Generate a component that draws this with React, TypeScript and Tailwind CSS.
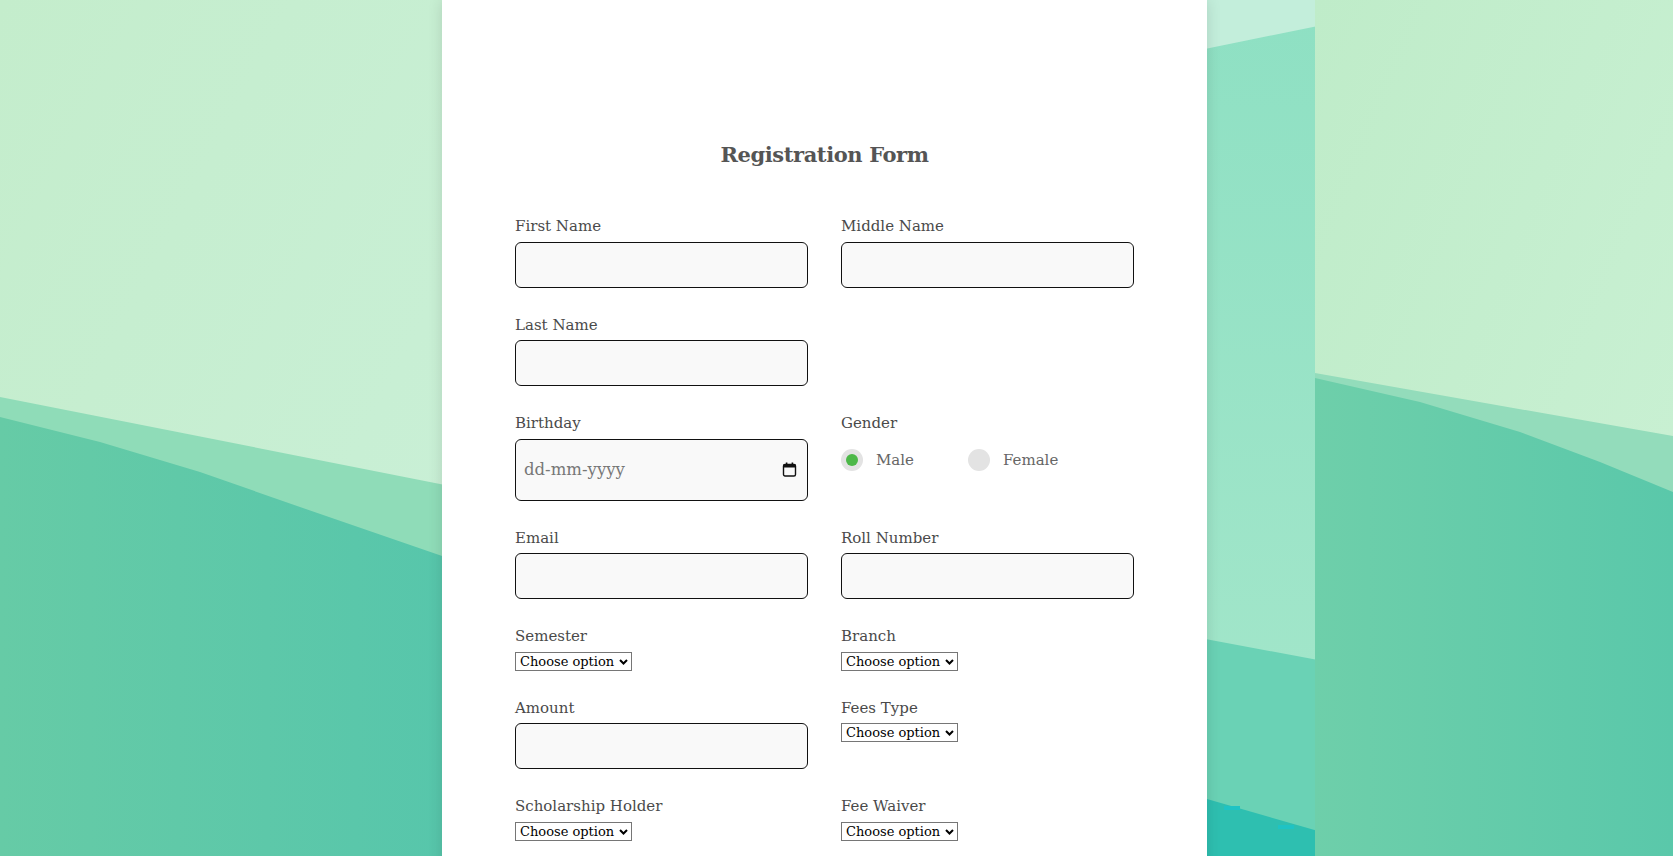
import React from "react";

const serif = "font-['DejaVu_Serif',serif]";

function Background() {
  return (
    <svg
      className="absolute left-0 top-0 h-[856px] w-full"
      viewBox="0 0 1673 856"
      preserveAspectRatio="none"
    >
      <defs>
        <linearGradient id="lightL" x1="0" y1="0" x2="1" y2="1">
          <stop offset="0" stopColor="#c4edcc" />
          <stop offset="1" stopColor="#caf0d8" />
        </linearGradient>
        <linearGradient id="darkL" x1="0" y1="0" x2="1" y2="0">
          <stop offset="0" stopColor="#66cba6" />
          <stop offset="1" stopColor="#57c6ab" />
        </linearGradient>
        <linearGradient id="stripMid" x1="0" y1="0" x2="0" y2="1">
          <stop offset="0" stopColor="#8ee0c3" />
          <stop offset="1" stopColor="#a6e7cb" />
        </linearGradient>
        <linearGradient id="lightR" x1="0" y1="0" x2="1" y2="1">
          <stop offset="0" stopColor="#bfecc9" />
          <stop offset="1" stopColor="#cbf1d5" />
        </linearGradient>
        <linearGradient id="darkR" x1="0" y1="0" x2="1" y2="0">
          <stop offset="0" stopColor="#6ecfaa" />
          <stop offset="1" stopColor="#5ac8aa" />
        </linearGradient>
      </defs>

      {/* left panel */}
      <rect x="0" y="0" width="445" height="856" fill="url(#lightL)" />
      <polygon points="0,397 445,485 445,856 0,856" fill="#8fdcb8" />
      <polygon
        points="0,417 100,442 200,472 300,507 445,557 445,856 0,856"
        fill="url(#darkL)"
      />

      {/* strip beside the card */}
      <rect x="1200" y="0" width="118" height="856" fill="url(#stripMid)" />
      <polygon points="1200,0 1318,0 1318,26 1200,50" fill="#c3eedb" />
      <polygon points="1200,638 1318,660 1318,856 1200,856" fill="#6ad2b5" />
      <polygon points="1200,797 1318,831 1318,856 1200,856" fill="#2ebfb0" />
      <rect x="1224" y="806" width="16" height="4" fill="#1fc3c4" />
      <rect x="1278" y="825" width="16" height="4" fill="#1fc3c4" />

      {/* right panel */}
      <rect x="1315" y="0" width="358" height="856" fill="url(#lightR)" />
      <polygon points="1315,373 1673,436 1673,856 1315,856" fill="#93dcbb" />
      <polygon
        points="1315,378 1420,402 1520,432 1600,462 1673,492 1673,856 1315,856"
        fill="url(#darkR)"
      />
    </svg>
  );
}

function Label({ children }: { children: React.ReactNode }) {
  return (
    <label className="mb-1 block text-[15px] leading-[22.5px] text-[#4a4a4a]">
      {children}
    </label>
  );
}

function TextField({ label, type = "text" }: { label: string; type?: string }) {
  return (
    <div>
      <Label>{label}</Label>
      <input
        type={type}
        className="block h-[46px] w-full rounded-[6px] border border-[#111] bg-[#f9f9f9] px-2 outline-none"
      />
    </div>
  );
}

function SelectField({ label }: { label: string }) {
  return (
    <div>
      <Label>{label}</Label>
      <div className="relative w-[117px]">
        <select className="block h-[19px] w-[117px] appearance-none border border-[#767676] bg-white pl-[4px] text-[13px] leading-[17px] text-black outline-none">
          <option>Choose option</option>
          <option>Option 1</option>
          <option>Option 2</option>
        </select>
        <svg
          className="pointer-events-none absolute right-[4px] top-[7px]"
          width="9"
          height="6"
          viewBox="0 0 9 6"
        >
          <path d="M1 1 L4.5 4.5 L8 1" fill="none" stroke="#000" strokeWidth="2" />
        </svg>
      </div>
    </div>
  );
}

function CalendarIcon() {
  return (
    <svg width="15" height="15" viewBox="0 0 15 15">
      <rect x="1.5" y="2.5" width="12" height="11.5" rx="1.5" fill="none" stroke="#111" strokeWidth="1.4" />
      <rect x="1.5" y="2.5" width="12" height="3" fill="#111" />
      <rect x="3.8" y="0.5" width="1.6" height="3" fill="#111" />
      <rect x="9.6" y="0.5" width="1.6" height="3" fill="#111" />
    </svg>
  );
}

function Radio({ label, checked }: { label: string; checked?: boolean }) {
  return (
    <label className="flex items-center gap-[13px] text-[15px] text-[#666]">
      <span className="flex h-[22px] w-[22px] items-center justify-center rounded-full bg-[#e3e3e3]">
        {checked && <span className="h-[12px] w-[12px] rounded-full bg-[#4cb848]" />}
      </span>
      {label}
    </label>
  );
}

export default function App() {
  return (
    <div className={`relative min-h-screen overflow-hidden bg-[#5ec9a8] ${serif}`}>
      <Background />

      <div className="relative ml-[442px] w-[765px] bg-white px-[73px] pb-[60px] pt-[140px] shadow-[0_0_14px_rgba(0,0,0,0.12)]">
        <h1 className="text-center text-[21px] font-bold leading-[30px] tracking-[-0.4px] text-[#555]">
          Registration Form
        </h1>

        <form className="mt-[45px] grid grid-cols-2 gap-x-[33px] gap-y-[26px]">
          <TextField label="First Name" />
          <TextField label="Middle Name" />

          <TextField label="Last Name" />
          <div />

          <div>
            <Label>Birthday</Label>
            <div className="relative">
              <input
                type="text"
                placeholder="dd-mm-yyyy"
                className="block h-[62px] w-full rounded-[6px] border border-[#111] bg-[#f9f9f9] pl-[8px] pr-8 text-[16.5px] text-[#333] outline-none placeholder:text-[#777]"
              />
              <span className="pointer-events-none absolute right-[11px] top-[23px]">
                <CalendarIcon />
              </span>
            </div>
          </div>
          <div>
            <Label>Gender</Label>
            <div className="mt-[14px] flex gap-[54px]">
              <Radio label="Male" checked />
              <Radio label="Female" />
            </div>
          </div>

          <TextField label="Email" type="email" />
          <TextField label="Roll Number" />

          <SelectField label="Semester" />
          <SelectField label="Branch" />

          <TextField label="Amount" />
          <SelectField label="Fees Type" />

          <SelectField label="Scholarship Holder" />
          <SelectField label="Fee Waiver" />
        </form>
      </div>
    </div>
  );
}
